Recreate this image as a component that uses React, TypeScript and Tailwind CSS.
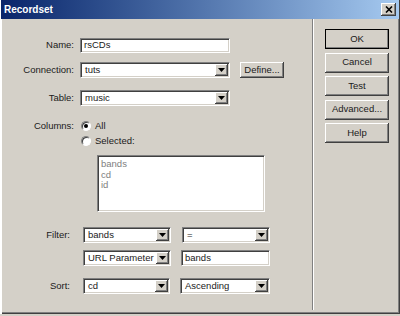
import React from 'react';

const sunken =
  'bg-white border border-t-[#808080] border-l-[#808080] border-b-white border-r-white shadow-[inset_1px_1px_0_#404040,inset_-1px_-1px_0_#d4d0c8]';
const raised =
  'bg-[#d4d0c8] shadow-[inset_-1px_-1px_0_#404040,inset_1px_1px_0_#fff,inset_-2px_-2px_0_#808080,inset_2px_2px_0_#d4d0c8]';

function Arrow() {
  return (
    <svg width="7" height="4" viewBox="0 0 7 4">
      <path d="M0 0h7L3.5 4z" fill="#000" />
    </svg>
  );
}

function Select({ value, w }: { value: string; w: string }) {
  return (
    <div className={`${sunken} ${w} h-full flex items-stretch p-[1px]`}>
      <div className="flex-1 flex items-center pl-[3px] truncate">{value}</div>
      <div className={`${raised} w-[13px] flex items-center justify-center`}>
        <Arrow />
      </div>
    </div>
  );
}

function TextBox({ value, w }: { value: string; w: string }) {
  return (
    <div className={`${sunken} ${w} h-full flex items-center pl-[3px]`}>
      {value}
    </div>
  );
}

function Radio({ checked, label }: { checked?: boolean; label: string }) {
  return (
    <div className="flex items-center gap-[4px]">
      <div className="w-[10px] h-[10px] rounded-full bg-white border border-t-[#808080] border-l-[#808080] border-b-white border-r-white shadow-[inset_1px_1px_0_#404040] flex items-center justify-center">
        {checked && <div className="w-[4px] h-[4px] rounded-full bg-black" />}
      </div>
      <span>{label}</span>
    </div>
  );
}

function Btn({ label, isDefault }: { label: string; isDefault?: boolean }) {
  return (
    <div
      className={`w-[64px] h-[20px] flex items-center justify-center ${raised} ${
        isDefault ? 'outline outline-1 outline-black -outline-offset-1' : ''
      }`}
    >
      {label}
    </div>
  );
}

export default function App() {
  return (
    <div className="w-[400px] h-[316px] bg-[#d4d0c8] font-['Liberation_Sans',Arial,sans-serif] text-[9.5px] text-[#1a1a1a] overflow-hidden">
      <div className="w-[400px] h-[314px] flex flex-col shadow-[inset_2px_0_0_#fff,inset_-1px_-1px_0_#404040,inset_-2px_-2px_0_#808080]">
        {/* title bar */}
        <div className="h-[19px] mx-[1px] flex items-center justify-between pl-[3px] pr-[3px] bg-gradient-to-r from-[#0a246a] to-[#a6caf0]">
          <span className="text-white font-bold text-[10px]">Recordset</span>
          <div className={`${raised} w-[15px] h-[13px] flex items-center justify-center`}>
            <svg width="8" height="7" viewBox="0 0 8 7">
              <path d="M1 0.5l6 6M7 0.5l-6 6" stroke="#000" strokeWidth="1.6" />
            </svg>
          </div>
        </div>

        <div className="flex flex-1 pb-[4px]">
          {/* left panel */}
          <div className="w-[310px] ml-[2px] flex flex-col pt-[19px]">
            <div className="flex h-[15px]">
              <div className="w-[72px] flex items-center justify-end">Name:</div>
              <div className="ml-[6px]">
                <TextBox value="rsCDs" w="w-[150px]" />
              </div>
            </div>

            <div className="flex h-[16px] mt-[9px]">
              <div className="w-[72px] flex items-center justify-end">Connection:</div>
              <div className="ml-[6px]">
                <Select value="tuts" w="w-[150px]" />
              </div>
              <div className={`${raised} ml-[10px] w-[44px] flex items-center justify-center`}>
                Define...
              </div>
            </div>

            <div className="flex h-[16px] mt-[12px]">
              <div className="w-[72px] flex items-center justify-end">Table:</div>
              <div className="ml-[6px]">
                <Select value="music" w="w-[150px]" />
              </div>
            </div>

            <div className="flex h-[12px] mt-[14px]">
              <div className="w-[72px] flex items-center justify-end">Columns:</div>
              <div className="ml-[7px] flex items-center">
                <Radio checked label="All" />
              </div>
            </div>
            <div className="flex h-[12px] mt-[3px]">
              <div className="ml-[79px] flex items-center">
                <Radio label="Selected:" />
              </div>
            </div>

            <div className={`${sunken} ml-[95px] mt-[8px] w-[168px] h-[57px] pl-[3px] pt-[3px] leading-[10.5px] text-[#808080]`}>
              <div>bands</div>
              <div>cd</div>
              <div>id</div>
            </div>

            <div className="flex h-[16px] mt-[15px]">
              <div className="w-[68px] flex items-center justify-end">Filter:</div>
              <div className="ml-[13px]">
                <Select value="bands" w="w-[88px]" />
              </div>
              <div className="ml-[11px]">
                <Select value="=" w="w-[88px]" />
              </div>
            </div>

            <div className="flex h-[16px] mt-[7px]">
              <div className="ml-[81px]">
                <Select value="URL Parameter" w="w-[88px]" />
              </div>
              <div className="ml-[10px]">
                <TextBox value="bands" w="w-[89px]" />
              </div>
            </div>

            <div className="flex h-[16px] mt-[12px]">
              <div className="w-[68px] flex items-center justify-end">Sort:</div>
              <div className="ml-[13px]">
                <Select value="cd" w="w-[87px]" />
              </div>
              <div className="ml-[10px]">
                <Select value="Ascending" w="w-[90px]" />
              </div>
            </div>
          </div>

          {/* separator */}
          <div className="w-[2px] border-l border-l-[#808080] border-r border-r-white" />

          {/* buttons */}
          <div className="flex flex-col pl-[11px] pt-[10px] gap-[3.5px]">
            <Btn label="OK" isDefault />
            <Btn label="Cancel" />
            <Btn label="Test" />
            <Btn label="Advanced..." />
            <Btn label="Help" />
          </div>
        </div>
      </div>
    </div>
  );
}
